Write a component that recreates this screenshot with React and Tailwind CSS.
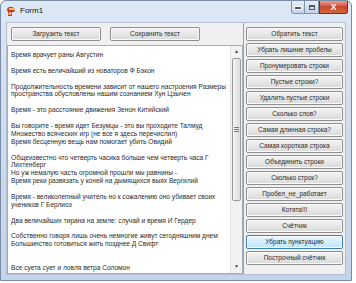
import React from 'react'

const lines = [
	'Время врачует раны Августин',
	'',
	'Время есть величайший из новаторов Ф Бэкон',
	'',
	'Продолжительность времени зависит от нашего настроения Размеры',
	'пространства обусловлены нашим сознанием Хун Цзычен',
	'',
	'Время - это расстояние движения Зенон Китийский',
	'',
	'Вы говорите - время идет Безумцы - это вы проходите Талмуд',
	'Множество всяческих игр (не все я здесь перечислил)',
	'Время бесценную вещь нам помогает убить Овидий',
	'',
	'Общеизвестно что четверть часика больше чем четверть часа Г',
	'Лихтенберг',
	'Но уж немалую часть огромной прошли мы равнины -',
	'Время реки развязать у коней на дымящихся выях Вергилий',
	'',
	'Время - великолепный учитель но к сожалению оно убивает своих',
	'учеников Г Берлиоз',
	'',
	'Два величайших тирана на земле: случай и время И Гердер',
	'',
	'Собственно говоря лишь очень немногие живут сегодняшним днем',
	'Большинство готовиться жить позднее Д Свифт',
	'',
	'',
	'Все суета сует и ловля ветра Соломон',
]

const actions = [
	'Обратить текст',
	'Убрать лишние пробелы',
	'Пронумеровать строки',
	'Пустые строки?',
	'Удалить пустые строки',
	'Сколько слов?',
	'Самая длинная строка?',
	'Самая короткая строка',
	'Объединить строки',
	'Сколько строк?',
	'Пробел_не_работает',
	'Котята!!!',
	'Счётчик',
	'Убрать пунктуацию',
	'Построчный счётчик',
]

function WinButton({ label, focused, className = '' }) {
	return (
		<div
			className={
				'flex items-center justify-center h-[14px] rounded-[2px] border text-[6.5px] leading-none text-[#2b2b2b] ' +
				(focused
					? 'border-[#3c7fb1] bg-gradient-to-b from-[#eaf6fd] to-[#bee6fd] shadow-[inset_0_0_0_1px_#fff] '
					: 'border-[#8f8f8f] bg-gradient-to-b from-[#f4f4f4] to-[#d9d9d9] shadow-[inset_0_0_0_1px_#fbfbfb] ') +
				className
			}
		>
			{label}
		</div>
	)
}

function TitleIcon() {
	return (
		<svg width="11" height="12" viewBox="0 0 11 12">
			<path d="M2 5 C2 1.5 8 0.5 9.5 4 L9.5 7 L7 7 L7 11 L3 11 L3 7 Z" fill="#c4381f" />
			<path d="M4 3 L9 3 L9 5 L4 5 Z" fill="#f3c24a" />
			<circle cx="5" cy="8.5" r="1.6" fill="#e8b98a" />
		</svg>
	)
}

export default function App() {
	return (
		<div className="w-[356px] h-[283px] bg-white font-['Liberation_Sans',Arial,sans-serif] overflow-hidden">
			<div className="w-[352px] h-[281px] flex flex-col rounded-t-[6px] border border-[#7b8ba3] bg-gradient-to-b from-[#dde8f6] via-[#cddbee] to-[#c4d4ea]">
				{/* title bar */}
				<div className="h-[20px] flex items-start pl-[4px] pr-[3px]">
					<div className="mt-[4px] flex items-center gap-[4px]">
						<TitleIcon />
						<span className="text-[8px] text-[#111] leading-none">Form1</span>
					</div>
					<div className="ml-auto flex">
						<div className="w-[14px] h-[13px] rounded-bl-[3px] border border-[#8495ae] border-t-0 bg-gradient-to-b from-[#e6eef9] to-[#c3d3e8] flex items-end justify-center pb-[3px]">
							<div className="w-[6px] h-[2px] bg-[#555] border border-white box-content" />
						</div>
						<div className="w-[14px] h-[13px] border-b border-r border-[#8495ae] bg-gradient-to-b from-[#e6eef9] to-[#c3d3e8] flex items-center justify-center">
							<div className="w-[6px] h-[5px] border border-[#555] border-t-2" />
						</div>
						<div className="w-[29px] h-[13px] rounded-br-[3px] border border-[#7a2a20] border-t-0 bg-gradient-to-b from-[#e8a193] via-[#c9452f] to-[#d4683c] flex items-center justify-center text-white text-[9px] font-bold leading-none">
							X
						</div>
					</div>
				</div>

				{/* client area */}
				<div className="flex-1 mx-[5px] mb-[5px] mt-[1px] bg-[#f0f0f0] border border-[#b3bfd0] flex">
					<div className="w-[236px] flex flex-col">
						<div className="h-[22px] flex items-start pt-[4px] pl-[4px] gap-[9px]">
							<WinButton label="Загрузить текст" className="w-[90px]" />
							<WinButton label="Сохранить текст" className="w-[90px]" />
						</div>
						<div className="flex-1 flex bg-white border border-[#a3aebd] overflow-hidden">
							<div className="flex-1 pl-[3px] pt-[5px] text-[6.6px] leading-[7.9px] text-[#2b2b2b] overflow-hidden">
								{lines.map((l, i) => (
									<div key={i} className="whitespace-nowrap h-[7.9px]">
										{l}
									</div>
								))}
							</div>
							{/* scrollbar */}
							<div className="w-[12px] flex flex-col bg-[#f2f2f2] border-l border-[#e2e2e2]">
								<div className="h-[12px] flex items-center justify-center text-[5px] text-[#444]">▲</div>
								<div className="mx-[1px] h-[143px] rounded-[2px] border border-[#9a9a9a] bg-gradient-to-r from-[#f4f4f4] to-[#dcdcdc] flex flex-col items-center justify-center gap-[1px]">
									<div className="w-[5px] h-px bg-[#777]" />
									<div className="w-[5px] h-px bg-[#777]" />
									<div className="w-[5px] h-px bg-[#777]" />
								</div>
								<div className="flex-1" />
								<div className="h-[12px] flex items-center justify-center text-[5px] text-[#444]">▼</div>
							</div>
						</div>
					</div>
					<div className="flex-1 border-l border-[#a0a0a0] flex flex-col gap-[2px] px-[2px] pt-[4px]">
						{actions.map((a, i) => (
							<WinButton key={a} label={a} focused={i === 13} />
						))}
					</div>
				</div>
			</div>
		</div>
	)
}
